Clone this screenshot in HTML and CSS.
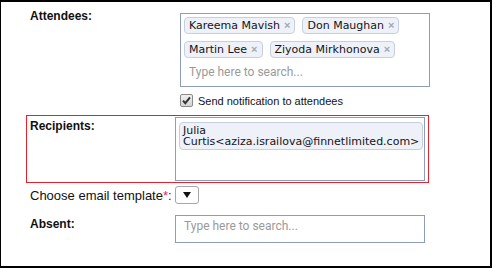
FILE: index.html
```html
<!DOCTYPE html>
<html lang="en">
<head>
  <meta charset="UTF-8">
  <meta name="viewport" content="width=device-width, initial-scale=1.0">
  <title>Meeting recipients</title>
  <link rel="stylesheet" href="styles.css">
</head>
<body>
  <div class="panel">
    <div class="row">
      <div class="label">Attendees:</div>
      <div class="field">
        <div class="tagbox attendees-box">
          <span class="tag">Kareema Mavish<span class="tag-x">×</span></span>
          <span class="tag">Don Maughan<span class="tag-x">×</span></span>
          <span class="tag">Martin Lee<span class="tag-x">×</span></span>
          <span class="tag">Ziyoda Mirkhonova<span class="tag-x">×</span></span>
          <input class="search" type="text" placeholder="Type here to search...">
        </div>
        <label class="notify">
          <span class="check">
            <svg width="11" height="11" viewBox="0 0 11 11"><path d="M2 5.6 L4.3 8.2 L9 2.4" fill="none" stroke="#333" stroke-width="2"/></svg>
          </span>
          Send notification to attendees
        </label>
      </div>
    </div>
    <div class="row row-error">
      <div class="label">Recipients:</div>
      <div class="field">
        <div class="tagbox recipients-box">
          <span class="tag tag-wide">Julia Curtis&lt;aziza.israilova@finnetlimited.com&gt;</span>
        </div>
      </div>
    </div>
    <div class="row row-template">
      <div class="label label-plain">Choose email template<span class="req">*</span>:</div>
      <div class="field">
        <button class="select" type="button">
          <svg width="8" height="6" viewBox="0 0 8 6"><path d="M0 0 H8 L4 6 Z" fill="#111"/></svg>
        </button>
      </div>
    </div>
    <div class="row row-absent">
      <div class="label">Absent:</div>
      <div class="field">
        <input class="search absent-box" type="text" placeholder="Type here to search...">
      </div>
    </div>
  </div>
</body>
</html>
```

FILE: styles.css
```css
body {
  margin: 0;
  background: #fff;
}
.panel {
  box-sizing: border-box;
  width: 492px;
  height: 268px;
  border: 2px solid #000;
  border-left-width: 1px;
  padding: 3px 0 0 25px;
  font-family: "Liberation Sans", Arial, sans-serif;
  color: #111;
}
.row {
  display: flex;
  align-items: flex-start;
  width: 403px;
  box-sizing: border-box;
  border: 1px solid transparent;
  padding: 1px 3px 1px 2px;
}
.row-error {
  border-color: #e3222b;
  margin-top: 6px;
}
.row-template {
  margin-top: 1px;
}
.row-absent {
  margin-top: 7px;
}
.label {
  flex: none;
  width: 145px;
  padding: 2px 0 0 1px;
  font-size: 12px;
  line-height: 14px;
  font-weight: bold;
  color: #111;
}
.label-plain {
  font-size: 13px;
  line-height: 15px;
  font-weight: normal;
  white-space: nowrap;
}
.req {
  color: #e8245a;
}
.field {
  flex: none;
  width: 250px;
}

/* tag boxes */
.tagbox {
  box-sizing: border-box;
  border: 1px solid #8d9bbd;
  background: #fff;
}
.attendees-box {
  display: flex;
  flex-wrap: wrap;
  gap: 7px;
  width: 250px;
  height: 74px;
  margin: 6px 0 0 5px;
  padding: 3px;
}
.recipients-box {
  width: 250px;
  height: 64px;
  padding: 4px 1px 4px 3px;
}
.tag {
  display: inline-flex;
  align-items: center;
  height: 17px;
  box-sizing: border-box;
  padding: 0 4px;
  border: 1px solid #c6cee0;
  border-radius: 4px;
  background: #eef1f7;
  font-family: "DejaVu Sans", Verdana, sans-serif;
  font-size: 11px;
  line-height: 15px;
  color: #141420;
  white-space: nowrap;
}
.tag-x {
  margin-left: 4px;
  font-family: "Liberation Sans", Arial, sans-serif;
  font-weight: bold;
  font-size: 11px;
  color: #a3a8b4;
}
.tag-wide {
  display: inline-block;
  height: auto;
  padding: 2px 3px;
  line-height: 11px;
  white-space: normal;
}
.search {
  box-sizing: border-box;
  width: 100%;
  height: 18px;
  margin: 0;
  padding: 0 0 4px 5px;
  border: none;
  outline: none;
  background: transparent;
  font-family: Roboto, sans-serif;
  font-size: 12px;
  line-height: 14px;
  color: #333;
}
.search::placeholder {
  color: #9a9a9a;
}
.absent-box {
  width: 250px;
  height: 28px;
  padding: 3px 8px 9px;
  border: 1px solid #8d9bbd;
}

/* checkbox line */
.notify {
  display: flex;
  align-items: center;
  gap: 5px;
  margin: 7px 0 0 5px;
  height: 13px;
  font-size: 11px;
  color: #111;
}
.check {
  box-sizing: border-box;
  width: 13px;
  height: 13px;
  display: flex;
  align-items: center;
  justify-content: center;
  border: 1px solid #8a8a8a;
  border-radius: 2px;
  background: linear-gradient(#f0f0f0, #d4d4d4);
}

/* select */
.select {
  box-sizing: border-box;
  width: 24px;
  height: 18px;
  margin: 0;
  padding: 0;
  display: flex;
  align-items: center;
  justify-content: center;
  border: 1px solid #a6a6a6;
  border-radius: 3px;
  background: #fff;
}
```
